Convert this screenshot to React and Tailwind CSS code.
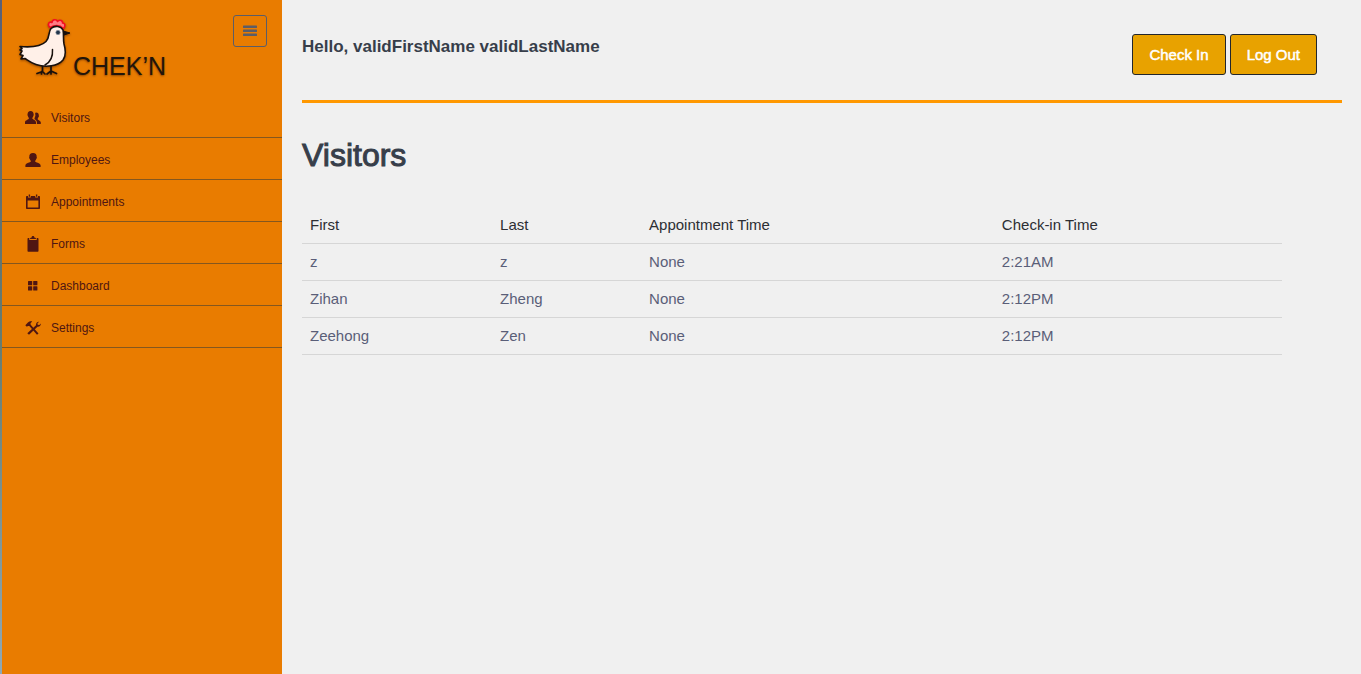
const iconPaths = {
  visitors: (
    <>
      <path d="M5.600 1C7.600 1 8.700 2.300 8.600 4.300 8.900 4.500 8.800 5.600 8.300 6 8.100 7 7.400 7.600 7.300 8.300 7.300 9.400 10.800 10 11 12.200V14H0v-1.900C.1 10.200 3.900 9.700 3.900 8.300 3.800 7.600 3.100 7 2.900 6 2.400 5.600 2.300 4.500 2.600 4.300 2.500 2.300 3.600 1 5.600 1Z" />
      <path d="M11 2.500c2 0 2.900 1.200 2.800 2.900.3.3.2 1.300-.3 1.700-.2.8-.8 1.300-.8 1.900 0 1.200 2.900 1.500 3.100 3.300V14h-3.900v-1.900c-.1-1.700-1.700-2.500-2.500-3.200.2-.5.4-1.200.5-2 .6-.6.7-1.700.2-3.100.2-.6.4-1.300.9-1.300Z" />
    </>
  ),
  employees: (
    <path d="M8 1c2.500 0 3.900 1.400 3.700 4 .3.3.2 1.500-.5 1.900-.2 1-1 1.700-1.100 2.400 0 1.300 5.300 1.500 5.500 4V15H.4v-1.700c.2-2.500 5.500-2.700 5.500-4C5.800 8.600 5 7.900 4.800 6.900c-.7-.4-.8-1.600-.5-1.900C4.100 2.400 5.500 1 8 1Z" />
  ),
  appointments: (
    <path fillRule="evenodd" d="M3.700.6h1.400v2.100H3.700ZM10.900.6h1.400v2.100h-1.400ZM2 2h1v1.500h2.800V2h4.400v1.500H13V2h1c.6 0 1 .4 1 1v11c0 .6-.4 1-1 1H2c-.6 0-1-.4-1-1V3c0-.6.4-1 1-1ZM2.600 6.500v7h10.800v-7Z" />
  ),
  forms: (
    <>
      <path d="M3.200 2h1.100v1.900h7.400V2h1.100c.4 0 .7.300.7.700v12.400c0 .4-.3.700-.7.700H3.200c-.4 0-.7-.3-.7-.7V2.700c0-.4.300-.7.700-.7Z" />
      <path d="M5.100 3.100V1.900l1.500-.5C6.700.5 7.200.1 8 .1s1.300.4 1.400 1.300l1.500.5v1.200Z" />
    </>
  ),
  dashboard: (
    <>
      <rect x="3" y="3" width="4.200" height="4.200" rx=".5" />
      <rect x="8.200" y="3" width="4.200" height="4.200" rx=".5" />
      <rect x="3" y="8.200" width="4.200" height="4.200" rx=".5" />
      <rect x="8.200" y="8.200" width="4.200" height="4.200" rx=".5" />
    </>
  ),
  settings: (
    <>
      <path d="M.3 5.200 2 3.500c1.300-1.700 3-2.300 5.200-2.100L5.500 3.200l.2 1.500 7.800 8.700-1.500 1.400-7.700-8.700-1.400-.2-1 .9Z" />
      <path d="M15.800 3.600c.2 2-1.200 3.500-3.300 3.200L4 14.800 2.300 13.200l8.700-8c-.3-2 1-3.600 3.200-3.500l-1.700 1.600.2 1.500 1.600.2Z" />
    </>
  ),
};

const navItems = [
  ["Visitors", "visitors"],
  ["Employees", "employees"],
  ["Appointments", "appointments"],
  ["Forms", "forms"],
  ["Dashboard", "dashboard"],
  ["Settings", "settings"],
];

const visitors = [
  ["z", "z", "None", "2:21AM"],
  ["Zihan", "Zheng", "None", "2:12PM"],
  ["Zeehong", "Zen", "None", "2:12PM"],
];

function Hen() {
  return (
    <svg viewBox="0 0 54 60" className="h-[60px] w-[54px] drop-shadow-[0_1px_1px_rgba(60,20,0,0.5)]" aria-hidden="true">
      <path d="M33 9.500c-3-3-1-6.500 2-5 .5-3.500 4.500-3.500 5.500-1 2.500-2.500 5.500-.5 5 1.500 3 0 3 3.500 1 5.500-3-3-8-4-13.500-1Z" fill="#ff7c84" stroke="#f50d20" strokeWidth="1.600" strokeLinejoin="round" />
      <path d="M46 13 53 15 47 17Z" fill="#18100c" stroke="#18100c" strokeLinejoin="round" />
      <g fill="none" stroke="#18100c" strokeWidth="1.700" strokeLinecap="round" strokeLinejoin="round">
        <path d="M25.500 48v5.500l-5.500 2M25.500 53.500l2.500 2.500M24.500 53.500V56M34 48v5l-4 3M34 53l5.500 2.500M34 53v3" />
      </g>
      <path d="M3 28.500C14 29.500 24 28.500 29 23.500 33 19.500 31 14 34 10.500 38 7 44 8 46 12c1 4 0 9 1 14 2 7 2 12-1 16-5 6-17 8-27 4.500C13 44.500 10 41.500 8 40.500l-4 .5 2-3.500-3-1 2-3.500-2-1 2-1.500Z" fill="#fff0e8" stroke="#18100c" strokeWidth="1.600" strokeLinejoin="round" />
      <path d="M35.500 31.500c.5 7-2 12.500-7.500 15.500" fill="none" stroke="#18100c" strokeWidth="1.500" strokeLinecap="round" />
      <circle cx="41" cy="14.500" r="2.200" fill="#22344a" stroke="#8d99a5" strokeWidth=".6" />
    </svg>
  );
}

export default function App() {
  return (
    <div className="flex min-h-screen bg-[#f0f0f0] font-['Liberation_Sans',Arial,sans-serif]">
      <div className="w-0.5 shrink-0 bg-linear-to-b from-[#596078] via-[#667c70] via-50% to-[#8fa8b5]" />
      <aside className="w-[280px] shrink-0 bg-[#e97c00]">
        <header className="flex h-24 items-start justify-between px-[15px] pt-[15px]">
          <a href="#home" className="flex items-end gap-0.5 pt-[3px]">
            <Hen />
            <span className="text-[25px] leading-6 text-[#22150a] [text-shadow:0_1px_2px_rgba(60,20,0,0.5)]">CHEK’N</span>
          </a>
          <button type="button" aria-label="Toggle menu" className="flex h-8 w-[34px] items-center justify-center rounded-[3px] border border-[#5b5d68] text-[#5b5d68]">
            <svg viewBox="0 0 14 12" className="h-3 w-3.5" fill="currentColor" aria-hidden="true">
              <rect y=".5" width="14" height="2.500" rx=".6" />
              <rect y="4.500" width="14" height="2.500" rx=".6" />
              <rect y="8.500" width="14" height="2.500" rx=".6" />
            </svg>
          </button>
        </header>
        <nav>
          <ul>
            {navItems.map(([label, icon]) => (
              <li key={icon}>
                <a href={"#" + icon} className="flex h-[42px] items-center gap-2.5 border-b border-[#84571f] pt-0.5 pl-[23px] text-[12px] leading-4 text-[#4f1612]">
                  <svg viewBox="0 0 16 16" className="size-4" fill="currentColor" aria-hidden="true">{iconPaths[icon]}</svg>
                  {label}
                </a>
              </li>
            ))}
          </ul>
        </nav>
      </aside>
      <main className="min-w-0 flex-1 pr-[19px] pl-5">
        <header className="flex h-[103px] items-start justify-between border-b-3 border-[#ff9800] pr-[25px] pt-[34px]">
          <p className="text-[17px] leading-[26px] font-bold text-[#373e4a]">Hello, validFirstName validLastName</p>
          <div className="flex gap-1">
            {["Check In", "Log Out"].map((label) => (
              <button key={label} type="button" className="h-[41px] rounded-[3px] border border-[#22262c] bg-[#e8a200] px-4 text-[15px] leading-5 text-white [-webkit-text-stroke:0.5px_white]">
                {label}
              </button>
            ))}
          </div>
        </header>
        <h1 className="mt-8 text-[32px] leading-10 text-[#373e4a] [-webkit-text-stroke:1px_#373e4a]">Visitors</h1>
        <div className="mt-8 pr-[60px]">
          <table className="w-full table-fixed border-collapse text-left text-[15px] leading-5 text-[#5a5e78]">
            <colgroup>
              <col className="w-[19.4%]" />
              <col className="w-[15.2%]" />
              <col className="w-[36%]" />
              <col />
            </colgroup>
            <thead>
              <tr className="border-b border-[#d6d6d6] text-[#2c2e33]">
                {["First", "Last", "Appointment Time", "Check-in Time"].map((h) => (
                  <th key={h} scope="col" className="p-2 font-normal">{h}</th>
                ))}
              </tr>
            </thead>
            <tbody>
              {visitors.map((row) => (
                <tr key={row[0]} className="border-b border-[#d6d6d6]">
                  {row.map((cell, i) => (
                    <td key={i} className="p-2">{cell}</td>
                  ))}
                </tr>
              ))}
            </tbody>
          </table>
        </div>
      </main>
    </div>
  );
}
